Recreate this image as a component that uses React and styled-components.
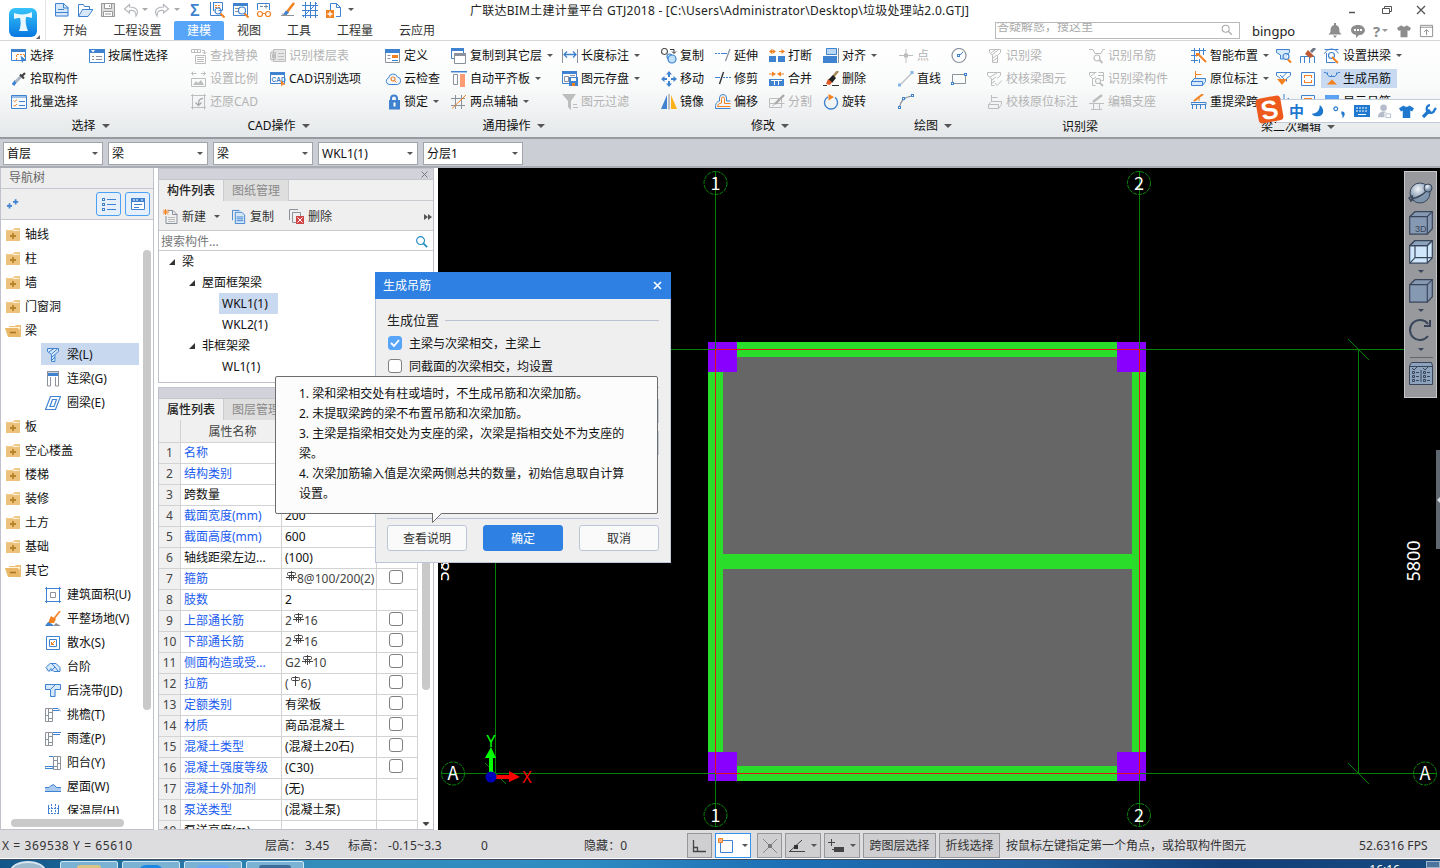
import React from 'react';
import styled, { createGlobalStyle, css } from 'styled-components';

const Global = createGlobalStyle`
  * { box-sizing: border-box; }
  html, body { margin: 0; padding: 0; overflow: hidden; }
  body { font: 12px/16px "Noto Sans", "Noto Sans CJK SC", sans-serif; color: #111; background: #fff; }
  svg { display: block; flex: none; }
`;

/* ---------- icon drawings: [kind, colour, path, width] ---------- */
const B = '#3f83d0';
const L = '#d7e8fb';
const G = '#8b929b';
const D = '#bdbdbd';
const O = '#f28122';
const N = '#39465a';

const icons = {
  file: [['f', L, 'M1.5 1.5h8l5 4v9h-13z'], ['s', B, 'M1.5 1.5h8l4.500 4v8.500h-12.500z M9.500 1.500v4.500h5 M1.500 10.500h12.500 M4 7.500h6']],
  folder: [['s', B, 'M1.500 14V2.500h5l1 2h5v2.500'], ['f', L, 'M1.500 14.500l4-7h10.500l-5 7z'], ['s', B, 'M1.500 14.500l4-7h10.500l-5 7z']],
  save: [['f', '#ddd', 'M1 1h14v14H1z'], ['s', '#999', 'M1.500 1.500h13v13h-13z M4.500 1.500v5h7v-5 M3.500 14.500v-5h9v5'], ['f', '#fff', 'M5 2h6v4H5z M4 10h8v4H4z'], ['s', '#999', 'M5 12h6 M9.500 3v2']],
  undo: [['s', '#b5b8bc', 'M6.500 2.500L1.500 7l5 4V8.500c5-.5 6.500 1 6.500 5.500 3-4 1.500-9-6.500-9z', 1.2]],
  redo: [['s', '#b5b8bc', 'M9.500 2.500L14.500 7l-5 4V8.500C4.500 8 3 9.500 3 14 0 10 1.500 5 9.500 5z', 1.2]],
  sigma: [['t', B, 3, 14, 16, 'Σ']],
  qFind: [['s', B, 'M1.500 0v13.500h13 M4.500 0v9 M4.500.5h9v8h-4'], ['d', O, 'M6 3.500h6 M6 5.500h6'], ['c', B, 9, 9, 3], ['s', O, 'M11.500 11.500l4 4', 2]],
  qView: [['s', B, 'M.5 1.500h14v12h-14z'], ['f', B, 'M0 1h15v3H0z'], ['s', G, 'M2 6.500h4 M2 9.500h3'], ['c', B, 9, 8.500, 3.500], ['s', O, 'M11.500 11.500l4 4', 2]],
  qGlass: [['s', B, 'M1.500 8V1.500h12V8'], ['s', '#789', 'M4 4.500h3 M8 4.500h4 M10 2.500v4'], ['c', O, 4, 12, 2.500], ['c', O, 12, 12, 2.500], ['s', O, 'M6.500 11.500h3']],
  qBrush: [['s', O, 'M14 1L7 10', 2.6], ['f', B, 'M6 8.500l3 2-3 3-3-1z'], ['s', G, 'M1 13.500h13 M2 12l4 1']],
  qGrid: [['s', B, 'M3.500 0v16 M8.500 0v16 M13.500 0v16 M0 3.500h16 M0 8.500h16 M0 13.500h16 M1 15L15 1']],
  qAdd: [['s', B, 'M4.500 8V1.500h6l4 4v9H10'], ['s', B, 'M10.500 1.500v4h4'], ['f', O, 'M0 8h8v8H0z'], ['s', '#fff', 'M4 9.500v5 M1.500 12h5', 1.4]],
  select: [['f', '#fff', 'M0 1h14v11H0z'], ['s', B, 'M.5 1.500h14v11H.5z'], ['f', B, 'M0 1h15v3H0z'], ['d', O, 'M5.500 12V6.500h8 M13.500 7v2'], ['f', B, 'M9.500 7.500l6 5-3 .2-1.500 2.300z']],
  byprop: [['f', '#fff', 'M0 2h16v12H0z'], ['s', B, 'M.5 1.500h15v13H.5z'], ['f', B, 'M0 1h16v4H0z'], ['s', G, 'M3 8.500h2 M7 8.500h6 M3 11.500h2 M7 11.500h6'], ['f', '#fff', 'M2 2h4L4 4.500z']],
  pick: [['s', B, 'M2 14l3-4', 3], ['s', '#aab4c4', 'M4.500 11L11 4.500', 3], ['s', '#444', 'M9 3.500l4 4 M11.500 4.500L14 2', 2.200]],
  batch: [['f', '#f6faff', 'M0 2h16v12H0z'], ['s', B, 'M.5 1.500h15v13H.5z M0 3h16'], ['s', O, 'M2.500 6.500l1.200 1.200L6 5.500 M2.500 11l1.200 1.200L6 10'], ['s', B, 'M8 7.500h6 M8 11.500h6']],
  replace: [['s', D, 'M.5 1.500h9v3h-9z M3.500 1.500v3 M6.500 1.500v3 M11 2.500h2.500V6 M11.500 4l2 2 2-2 M4.500 7.500h10v8h-10z M6 9.500h7 M6 11.500h7 M6 13.500h7']],
  scale: [['s', D, 'M.5 7.500h14v8H.5z M.5 2.500h5 M2.500.5l-2 2 2 2 M10 2.500h5 M12.500.5l2 2-2 2'], ['f', D, 'M2 14l3-4 2 2 3-3 3 5z']],
  restore: [['s', D, 'M1.500 0v15.500 M0 1.500h15 M13.500 0v15.500 M0 13.500h15'], ['s', '#aaa', 'M12 4.500c-4 0-4.500 2-4.500 7 M4.500 8.500l3 3 3-3', 1.300]],
  layer: [['f', '#e7e7e7', 'M1 2h15v12H1z'], ['s', D, 'M3.500 1.500h12v12h-12z M.5 4.500h5v7h-5z M8 5.500h6 M8 8.500h6 M8 11.500h6'], ['f', D, 'M2 6h3v4H2z']],
  cad: [['f', '#fff', 'M0 1h15v11H0z'], ['s', B, 'M.5 1.500h14v11H.5z'], ['f', B, 'M0 1h15v3H0z'], ['t', B, 1.500, 11, 6.500, 'CAD'], ['f', O, 'M10.500 9l5 4.500-2.700.2-1.300 2z']],
  define: [['f', '#fff', 'M1 2h14v12H1z'], ['s', G, 'M.5 4v10.500h14V4'], ['f', B, 'M0 1h15v4H0z'], ['s', G, 'M2.500 7.500h3 M2.500 10.500h3'], ['f', O, 'M7 7h6v3H7z'], ['s', B, 'M7 12.500h6']],
  cloud: [['f', '#eef6ff', 'M4 13a3.500 3.500 0 0 1 0-6 4.500 4.500 0 0 1 8.500 0 3 3 0 0 1 0 6z'], ['s', B, 'M4 13.500a3.400 3.400 0 0 1-.5-6.500A4.700 4.700 0 0 1 12.500 6a3.800 3.800 0 0 1 0 7.500z'], ['c', O, 8, 8, 2], ['s', O, 'M9.500 9.500l2 2']],
  lock: [['s', B, 'M6 7V4.500a3 3 0 0 1 6 0V7', 2], ['f', B, 'M4 6h11v9.500H4z'], ['f', '#fff', 'M8.500 8.500h2v4h-2z']],
  copylayer: [['f', '#fff', 'M0 1h12v10H0z'], ['s', B, 'M.5.5h12v10H.5z'], ['f', B, 'M0 0h13v3H0z'], ['f', '#fff', 'M3 6h12v9H3z'], ['s', G, 'M3.500 5.500h11v10h-11z'], ['f', G, 'M3 5h12v3H3z']],
  align2: [['s', B, 'M0 .7h16', 1.500], ['s', G, 'M2.500 3.500h4v10h-4z'], ['f', '#fb9c74', 'M9 3h5v13H9z']],
  axis: [['s', G, 'M0 4.500h14 M0 11.500h14 M4.500 1v14 M10.500 1v14'], ['s', O, 'M1 14.500L15 1']],
  length: [['s', G, 'M.5 1v14 M15.500 1v14'], ['s', B, 'M2 6.500h12 M5 3.500l-3 3 3 3 M11 3.500l3 3-3 3', 1.300]],
  store: [['s', B, 'M.5.5h14v12H.5z'], ['f', B, 'M0 0h15v3H0z'], ['s', G, 'M2.500 5.500h4v5h-4z M8 4.500h5'], ['f', B, 'M7 6h9v9H7z'], ['f', '#fff', 'M9 7h5v3H9z'], ['f', O, 'M10 12h3v3h-3z']],
  filter: [['f', D, 'M0 0h14L9 7v9L6 13V7z'], ['s', D, 'M11 10.500h4 M11 13.500h5']],
  copy: [['c', '#555', 3.500, 3.500, 3], ['s', '#333', 'M9 1.500h4V5 M11 3.500l2 2 2-2'], ['c', B, 8.500, 8.500, 2.500], ['cf', '#bfe0f6', 11, 11, 4], ['c', B, 11, 11, 4]],
  move: [['f', B, 'M8 0l3 3.500H9V6H7V3.500H5z M8 16l3-3.500H9V10H7v2.500H5z M0 8l3.500-3v2H6v2H3.500v2z M16 8l-3.500-3v2H10v2h2.500v2z']],
  mirror: [['f', B, 'M6 1v14H0z'], ['s', '#888', 'M8 0v15.500'], ['f', '#fbb117', 'M10 1v14h6z']],
  extend: [['d', B, 'M0 5.500h8'], ['s', B, 'M8 5.500h4'], ['s', G, 'M15 1l-4.500 12', 1.300]],
  trim: [['s', B, 'M0 6.500h5'], ['d', B, 'M8 6.500h8'], ['s', '#333', 'M8.500 1L4.500 13', 1.400]],
  offset: [['s', B, 'M4.500 7V4a3.500 3.500 0 0 1 7 0v3h4M4.500 7C1 8 .5 10 .5 14.500h15'], ['s', O, 'M6.500 9V4.500a1.500 1.500 0 0 1 3 0V9.500h6 M6.500 9C4 9.500 3 10 2.500 12.500h13']],
  brk: [['f', B, 'M0 8h7v6H0z M9 8h7v6H9z'], ['f', O, 'M1 3h2.500V1L7 3.500 3.500 6V4H1z M0 3.500L3 1v5z'], ['f', O, 'M10 3h2.500V1L16 3.500 12.500 6V4H10z']],
  merge: [['f', B, 'M0 8h15v7H0z'], ['s', '#fff', 'M5.500 10v4 M9.500 10v4 M2 9.500h11'], ['f', O, 'M0 2.500h3V.5l4 2.500-4 2.500v-2H0z M15 2.500h-3V.5L8 3l4 2.500v-2h3z']],
  split: [['s', D, 'M.5 4.500h12v9H.5z M.5 9.500h15'], ['s', '#aaa', 'M15 1L6 10', 2.400], ['s', D, 'M3 12l3-2']],
  align: [['s', G, 'M15.500 0v15'], ['f', '#b9d6f5', 'M3 0h11v7H3z'], ['s', B, 'M3.500.5h10v6h-10z'], ['f', B, 'M0 8h14v7H0z']],
  erase: [['s', '#a88a58', 'M15 0L9 7', 2.600], ['f', '#222', 'M10 4l3 3-4 5-4-3z'], ['f', '#e05a2a', 'M5 8l4 3-2 3-4-1z'], ['s', '#333', 'M0 14.500h4 M9 14.500h7']],
  rotate: [['s', B, 'M5 2.800a6.500 6.500 0 1 0 7 .6', 1.400], ['f', O, 'M5.500 0l5.500 3-5.500 3.500z']],
  point: [['s', D, 'M8 1v14 M1 7.500h14'], ['f', D, 'M6 5.500h4v4H6z']],
  line: [['s', '#b9bcc1', 'M2 14L14 2', 1.200], ['f', '#86b5ea', 'M0 12.500h3v3H0z M12.500 0h3v3h-3z']],
  arc: [['s', G, 'M1.500 14.500C2 7 6 3 14 2', 1.200], ['sq', B, 0, 12], ['sq', B, 4, 3], ['sq', B, 13, 0]],
  circle: [['c', G, 8, 7.500, 7], ['s', B, 'M8 8l4-4'], ['sq', B, 6, 6]],
  rect: [['s', G, 'M1.500 3.500h13v9h-13z'], ['sq', B, 0, 11], ['sq', B, 13, 2]],
  beamD: [['s', D, 'M2.500 1.500h11v3l-3 3v7h-5v-7l-3-3z M4 5l4-3 M5 7l6-5 M6 10l4-3 M6 13l4-3']],
  hookD: [['s', D, 'M0 1.500h4l2 4h6l2-4h2'], ['c', D, 8, 10, 3], ['s', D, 'M10.500 12l3 3', 1.800]],
  checkD: [['s', D, 'M.5 1.500h13v3l-3.500 3 M.5 1.500v3l4 3v7l3 0 M3 6l7-4 M5 9l4-3 M5 12l3-2 M8 12l2 2.500 5-5']],
  compD: [['s', D, 'M.5 1.500h7 M.5 1.500v3l3 3v7h3 M9.500 1.500h5v8h-2 M9 4.500h5 M2 5l4-3 M4 8l3-2'], ['c', D, 9, 10, 2.500], ['s', D, 'M11 12l3 3', 1.800]],
  noteD: [['s', D, 'M4.500 8V1 M4.500 3.500h6 M4.500 7.500h9 M1.500 10.500l3-3h10v3l-3 4h-10z M1.500 10.500h10v4']],
  seatD: [['s', D, 'M4 8l9-7', 2.400], ['s', D, 'M0 9.500h15 M4.500 10v5 M10.500 10v5 M2 15.500h11']],
  smart: [['s', B, 'M0 2.500h15 M0 7.500h7 M0 12.500h7 M3.500 0v15 M8.500 0v6 M12.500 0v7 M8.500 11v4'], ['s', O, 'M7 6l8 8', 2], ['f', O, 'M5 5h4l-4 4z']],
  note: [['s', O, 'M4.500 8V0 M4.500 3.500h6'], ['f', L, 'M1 10l3-3h11l-3 7H1z'], ['s', B, 'M.5 10.500l3-3h11v3l-3 4H.5z M.5 10.500h11v4']],
  span: [['s', B, 'M0 8.500h15v2H0z M1.500 10v5 M5.500 10v5 M9.500 10v5 M14.500 10v5'], ['s', O, 'M3 7L12 0', 2], ['s', O, 'M8 2v5']],
  beamFind: [['f', L, 'M1 1h13v4l-3 2v4H5V7L1 5z'], ['s', B, 'M.5 1.500h13v3l-3 2.500 M.5 1.500v3l4 2.500v4h3'], ['c', B, 10, 8.500, 3], ['s', O, 'M12 11.500l3 3', 2.200]],
  spanBrush: [['s', B, 'M.5 15V8.500h14V15 M4.500 9v6 M9.500 9v6'], ['s', '#6f7685', 'M15 0l-4 4', 3], ['f', '#c05a34', 'M8 2l6 6-4 2-5-4z']],
  arch: [['s', B, 'M.5 5.500c3-6 11-6 14 0 M.5 1.500h14 M2.500 5v9.500h9'], ['c', B, 7.500, 7.500, 3], ['s', O, 'M8 9l6 6', 2]],
  beamTri: [['s', B, 'M.5 1.500h14v3l-4 3v3 M.5 1.500v3l4 3 M4 4l4 4 M11 1.500l-5 5'], ['f', O, 'M1 8h10l-5 6z']],
  sheet: [['s', B, 'M1.500 1.500h13v13h-13z'], ['s', O, 'M4 4.500h8 M4 11.500h8 M4.500 5v2 M11.500 9v2 M4.500 9v2 M11.500 5v2']],
  hook: [['s', B, 'M0 1.500h2l3 4h6l3-4h2 M3.500 3.500v-2 M12.500 3.500v-2 M7.500 4v2'], ['f', O, 'M8 8.500l5 5H3z']],
  starB: [['s', B, 'M8 0v7 M3 4l4 3 M13 4l-4 3 M2 9h12']],
  flagB: [['f', '#5aa2f3', 'M1 1h14v8H1z']],
  bell: [['f', '#8d8d8d', 'M7 0h2v2c3 1 3.500 3 3.500 7l2 2.500h-13l2-2.500C3.500 5 4 3 7 2z M6 12.500h4L8 15z']],
  chat: [['f', '#8d8d8d', 'M8 2c9 0 9 10 1 10l-3 3v-3C-1 11-1 2 8 2z'], ['d', '#fff', 'M4 7h8', 1.800]],
  shirt: [['f', '#8d8d8d', 'M5 1.500c1 2 5 2 6 0l5 3-2 3.500-2-1v8H4V7L2 8 0 4.500z']],
  winup: [['s', '#8d8d8d', 'M1.500 2.500h13v12h-13z M1 4.500h14 M8 13V7.500 M5.500 9.500L8 7l2.500 2.500']],
  search: [['c', '#aaa', 6.500, 6.500, 4], ['s', '#aaa', 'M9.500 9.500l4 4', 1.500]],
  searchB: [['c', '#1d8bc4', 7, 7, 4.200], ['s', '#1d8bc4', 'M10 10l4 4', 1.800]],
  plus2: [['s', B, 'M1 10h6 M4 7v6 M8 5.500h6 M11 2.500v6', 2]],
  listv: [['s', B, 'M6 3.500h9 M6 8.500h9 M6 13.500h9'], ['sq', B, 1, 2], ['sq', B, 1, 7], ['sq', B, 1, 12]],
  cardv: [['f', '#fff', 'M1 2h14v12H1z'], ['s', B, 'M1.500 2.500h13v11h-13z'], ['f', B, 'M1 2h14v4H1z'], ['d', '#fff', 'M3 4h6 M11 4h2'], ['s', B, 'M4 8.500h8 M4 11.500h5']],
  dirC: [['f', '#eec98a', 'M1 3h7l1-2h6v13H1z'], ['f', '#fdf3dd', 'M8 3h6v1H8z'], ['f', '#ecc27c', 'M1 4h14v10H1z'], ['s', '#b8842a', 'M8 6v6 M5 9h6', 1.800]],
  dirO: [['f', '#eec27a', 'M4 3h6l1-1h5v12H4z'], ['f', '#fff4dc', 'M4 4h11v2H4z'], ['f', '#e8b866', 'M0 5h13l2 9H3z'], ['s', '#a87422', 'M5 9.500h6', 1.500]],
  nBeam: [['f', L, 'M2 1h12v3l-3 3v8H6V7L2 4z'], ['s', B, 'M2.500 1.500h11v3l-3.500 3v7H6.500v-7l-4-3z M4 5l5-3.500 M6.500 7l6-5 M7 10l3-2.500 M7 13l3-3']],
  nLian: [['f', '#ccd2d8', 'M2 1h12v4H2z'], ['s', G, 'M2.500 4v11h3V6 M10.500 6v9h3V4 M2 .5h12 M2.500 0v5 M13.500 0v5'], ['f', B, 'M3 2h10v3H3z']],
  nRing: [['s', B, 'M5.500 1.500h10l-5 13H.5z M7.500 4.500h4L9 11.500H5z', 1.200]],
  nArea: [['s', B, 'M1.500 0v16 M14.500 0v16 M0 1.500h16 M0 14.500h16'], ['s', G, 'M5.500 5.500h5v5h-5z']],
  nFlat: [['s', O, 'M15 0L8 9', 1.600], ['f', O, 'M6 5l5 3-2 4-6 0z'], ['f', B, 'M0 15l3-4 4 2 2 2z'], ['f', G, 'M8 15l3-3 5 3z']],
  nWater: [['s', B, 'M1.500 1.500h13v13h-13z M4.500 4.500h7v7h-7z'], ['s', O, 'M10 6l-4 4 M6.500 7v2.500H9']],
  nStep: [['f', L, 'M1 9l4-5h6l4 4v4l-6 1-8-1z'], ['s', B, 'M1 8.500l4-4h6l4 4v4H9l-3-3-2 3-3-4z M6 4l4 4-4 4 M10 8l3 4']],
  nPost: [['f', L, 'M0 2h16v5h-5v7H5V7H0z'], ['s', B, 'M.5 1.500h15v5H10v7H5.500v-7h-5z M5.500 6.500l5-5']],
  nEave: [['s', G, 'M.5 1.500h7v13h-7z M3.500 1.500v13 M3.500 5.500h4 M.5 8.500h3 M3.500 11.500h4'], ['s', B, 'M8 1.500h5l3 3 M8 3.500h6']],
  nRain: [['s', G, 'M.5 1.500h7v13h-7z M3.500 1.500v13 M3.500 5.500h4 M.5 8.500h3 M3.500 11.500h4'], ['s', B, 'M8 1.500h8 M8 3.500h7']],
  nBalc: [['s', G, 'M8.500 1.500h7v13h-7z M12.500 1.500v13 M8.500 5.500h4 M12.500 8.500h3 M8.500 11.500h4'], ['s', B, 'M4 1.500h4 M0 11.500h8v2H0z']],
  nRoof: [['f', '#a9c9ee', 'M0 8h4l4-3 4 3h4v4H0z'], ['s', B, 'M0 8.500h4l2-2h1l1.500-1 3 3H16 M0 12.500h16']],
  nWarm: [['s', B, 'M3.500 2v13 M13.500 2v13'], ['d', B, 'M6.500 1v14 M10.500 1v14 M3 5.500h11 M3 10.500h11']],
  newdoc: [['s', G, 'M5 1.500h5l4 4v9h-11V7 M9.500 1.500v4h5'], ['s', '#bbb', 'M5 8.500h7 M5 10.500h7 M5 12.500h7'], ['s', O, 'M0 .5l5 5 M5 .5l-5 5 M2.500 0v6 M0 3h6']],
  copydoc: [['s', B, 'M.5 12V1.500H8'], ['f', L, 'M3 3h8l2 2v10H3z'], ['s', B, 'M3.500 3.500h7l3 3v9h-10z M5 8.500h7 M5 10.500h7 M5 12.500h7']],
  deldoc: [['s', G, 'M.5 11V.5H9 M3.500 13V3.500h8V7 M3.500 13.500H7'], ['f', '#cf4545', 'M7 7h8v8H7z'], ['s', '#fff', 'M8.500 8.500l5 5 M13.500 8.500l-5 5']],
  angle: [['s', '#444', 'M1.500 2v11.500H14 M1.500 9.500h4v4', 1.300]],
  box: [['s', B, 'M2.500 2.500h12v12h-12z'], ['f', '#f8b68a', 'M1 0h4v5H1z'], ['s', O, 'M.5.5h4v4h-4z']],
  cross: [['s', '#888', 'M1 1l14 14 M15 1L1 15'], ['f', '#777', 'M6 6h4v4H6z']],
  ang2: [['s', '#444', 'M0 13.500h16 M1 13L13 2'], ['f', '#333', 'M5 7h4v4H5z']],
  plusbox: [['s', '#444', 'M0 4.500h7 M3.500 1v7 M4 11.500h2'], ['f', '#444', 'M6 9h10v5H6z']],
  moon: [['f', '#1f78cf', 'M10 1c6 4 5 13-2 13-4 0-6-1-7-3 6 0 9-4 9-10z']],
  dots: [['c', '#1f78cf', 4, 5, 2], ['f', '#1f78cf', 'M10 8c4-1 5 4 1 7 0-2 1-3-1-4z']],
  keys: [['f', '#1f78cf', 'M0 2h16v12H0z'], ['d', '#fff', 'M2 5h12 M2 8h12'], ['s', '#fff', 'M4 11.500h8']],
  user: [['cf', '#b5bccb', 7, 4, 3.500], ['f', '#b5bccb', 'M1 14c0-8 12-8 12 0z'], ['f', '#fff', 'M8 9h7v6H8z'], ['s', '#b5bccb', 'M9.500 10.500h5v4h-5z']],
  shirtB: [['f', '#1f78cf', 'M5 1.500c1 2 5 2 6 0l5 3-2 3.500-2-1v8H4V7L2 8 0 4.500z']],
  wrench: [['s', '#1f78cf', 'M2 14l7-7', 3.200], ['s', '#1f78cf', 'M13.500 7a4 4 0 1 1-4.500-5 M13 7.500L15 5', 2.200]],
};

const draw = ([k, c, a, b, e, s], i) => {
  if (k === 'f') return <path key={i} d={a} fill={c} />;
  if (k === 's') return <path key={i} d={a} fill="none" stroke={c} strokeWidth={b || 1} />;
  if (k === 'd') return <path key={i} d={a} fill="none" stroke={c} strokeWidth={b || 1} strokeDasharray="2 1" />;
  if (k === 'c') return <circle key={i} cx={a} cy={b} r={e} fill="none" stroke={c} strokeWidth="1.2" />;
  if (k === 'cf') return <circle key={i} cx={a} cy={b} r={e} fill={c} />;
  if (k === 'sq') return <rect key={i} x={a + 0.5} y={b + 0.5} width="2" height="2" fill="#fff" stroke={c} />;
  return <text key={i} x={a} y={b} fontSize={e} fontWeight="bold" fontFamily="Liberation Sans, sans-serif" fill={c}>{s}</text>;
};
const Icon = ({ n, size = 16 }) => (
  <svg width={size} height={size} viewBox="0 0 16 16">{icons[n].map(draw)}</svg>
);

const Caret = styled.i`
  flex: none;
  border: solid transparent;
  border-width: ${p => (p.$big ? '4px 4px 0' : '3px 3px 0')};
  border-top-color: ${p => p.$c || '#555'};
  margin-left: ${p => p.$ml ?? 5}px;
`;

/* ---------- layout shell ---------- */
const Screen = styled.div`
  position: relative; width: 1440px; height: 868px; overflow: hidden;
  display: flex; flex-direction: column; white-space: nowrap;
`;
const Header = styled.header`
  height: 41px; flex: none; display: flex; background: #fff; border-bottom: 1px solid #d5d7da;
`;
const AppButton = styled.div`
  width: 46px; height: 40px; padding: 8px 0 0 9px; border-right: 1px solid #e2e4e6; position: relative;
  &::after { content: ''; position: absolute; right: 5px; bottom: 1px; border: 2px solid; border-color: transparent #666 #666 transparent; }
`;
const HeadLeft = styled.div`width: 424px; display: flex; flex-direction: column;`;
const QuickBar = styled.div`height: 22px; display: flex; align-items: center; padding: 0 0 2px 8px;`;
const QItem = styled.div`margin-left: ${p => p.$ml}px; display: flex;`;
const Tabs = styled.nav`display: flex; height: 19px; padding-left: 3px;`;
const Tab = styled.span`
  width: ${p => p.$w}px; text-align: center; line-height: 20px; color: #333; height: 19px;
  ${p => p.$on && css`background: #57a5f9; color: #fff; border-radius: 2px 2px 0 0;`}
`;
const Title = styled.h1`
  margin: 3px 0 0; width: 525px; font-size: 12px; font-weight: 400; color: #222; letter-spacing: ${p => p.$ls}px;
`;
const HeadRight = styled.div`width: 445px; display: flex; flex-direction: column;`;
const WinRow = styled.div`height: 22px; display: flex; justify-content: flex-end; align-items: center; gap: 24px; padding: 0 14px 2px 0;`;
const UserRow = styled.div`display: flex; align-items: center; height: 17px;`;
const AskBox = styled.div`
  width: 245px; height: 17px; border: 1px solid #b9b9b9; overflow: hidden; display: flex; justify-content: space-between;
  color: #aaa; padding: 0 5px 0 1px;
  span { line-height: 8px; height: 17px; }
`;
const User = styled.span`font: 13px/16px "Noto Sans", sans-serif; color: #222; width: 75px; padding-left: 12px;`;
const Help = styled.span`font: bold 15px/16px "Noto Sans", sans-serif; color: #8d8d8d; margin-left: 7px;`;

/* ---------- ribbon ---------- */
const Ribbon = styled.div`
  height: 98px; flex: none; display: flex; border-bottom: 2px solid #979a9f;
  background: linear-gradient(#fff 0%, #fafbfb 45%, #e5e8ea 100%);
`;
const Group = styled.section`
  width: ${p => p.$w}px; display: flex; flex-direction: column; position: relative;
  &::after { content: ''; align-self: flex-end; width: 1px; position: absolute; right: 0; top: 3px; bottom: 3px; background: #cdd0d3; }
`;
const GroupBody = styled.div`display: flex; height: 72px; padding: 3px 0 0 ${p => p.$pl || 9}px;`;
const GroupName = styled.div`display: flex; align-items: center; justify-content: center; height: 24px; padding: ${p => (p.$low ? 4 : 2)}px ${p => (p.$low ? 0 : 1)}px 0 0;`;
const Col = styled.div`width: ${p => p.$w}px; flex: none;`;
const Tool = styled.div`
  height: 23px; display: flex; align-items: center; gap: 3px; color: ${p => (p.$off ? '#b3b3b3' : '#111')};
  ${p => p.$hot && css`background: #c8daf2; height: 19px; margin: 2px 0 2px -3px; padding-left: 3px; width: 76px;`}
`;
const ribbon = [
  { w: 182, pl: 11, name: '选择', arrow: 1, cols: [[78, ['select', '选择'], ['pick', '拾取构件'], ['batch', '批量选择']], [90, ['byprop', '按属性选择']]] },
  { w: 194, name: 'CAD操作', arrow: 1, cols: [[79, ['replace', '查找替换', 'o'], ['scale', '设置比例', 'o'], ['restore', '还原CAD', 'o']], [100, ['layer', '识别楼层表', 'o'], ['cad', 'CAD识别选项']]] },
  { w: 276, name: '通用操作', arrow: 1, cols: [[66, ['define', '定义'], ['cloud', '云检查'], ['lock', '锁定', 'a']], [111, ['copylayer', '复制到其它层', 'a'], ['align2', '自动平齐板', 'a'], ['axis', '两点辅轴', 'a']], [90, ['length', '长度标注', 'a'], ['store', '图元存盘', 'a'], ['filter', '图元过滤', 'o']]] },
  { w: 237, name: '修改', arrow: 1, cols: [[54, ['copy', '复制'], ['move', '移动'], ['mirror', '镜像']], [54, ['extend', '延伸'], ['trim', '修剪'], ['offset', '偏移']], [54, ['brk', '打断'], ['merge', '合并'], ['split', '分割', 'o']], [60, ['align', '对齐', 'a'], ['erase', '删除'], ['rotate', '旋转']]] },
  { w: 89, name: '绘图', arrow: 1, cols: [[53, ['point', '点', 'o'], ['line', '直线'], ['arc', '']], [20, ['circle', ''], ['rect', '']]] },
  { w: 204, name: '识别梁', low: 1, cols: [[102, ['beamD', '识别梁', 'o'], ['checkD', '校核梁图元', 'o'], ['noteD', '校核原位标注', 'o']], [90, ['hookD', '识别吊筋', 'o'], ['compD', '识别梁构件', 'o'], ['seatD', '编辑支座', 'o']]] },
  { w: 232, name: '梁二次编辑', arrow: 1, low: 1, cols: [[85, ['smart', '智能布置', 'a'], ['note', '原位标注', 'a'], ['span', '重提梁跨']], [24, ['beamFind', ''], ['beamTri', ''], ['starB', '']], [24, ['spanBrush', ''], ['sheet', ''], ['sheet', '']], [90, ['arch', '设置拱梁', 'a'], ['hook', '生成吊筋', 'h'], ['flagB', '显示吊筋']]] },
];

/* ---------- filter bar ---------- */
const FilterBar = styled.div`
  height: 29px; flex: none; display: flex; gap: 5px; padding: 3px 0 0 3px; background: #cbced4; border-bottom: 2px solid #a9acb3;
`;
const Combo = styled.div`
  width: 100px; height: 23px; background: #fff; border: 1px solid #a2a4a9; padding: 0 4px 0 3px;
  display: flex; justify-content: space-between; align-items: center;
`;

/* ---------- main ---------- */
const Main = styled.main`height: 662px; flex: none; display: flex; background: #fff;`;
const Nav = styled.aside`width: 154px; border: 1px solid #bfc2ca; border-top: 0; display: flex; flex-direction: column; position: relative;`;
const NavTitle = styled.div`height: 21px; background: #eee; color: #666; padding: 2px 0 0 8px; border-bottom: 1px solid #c5c8cf;`;
const NavTools = styled.div`height: 31px; background: #eee; border-bottom: 1px solid #c5c8cf; display: flex; align-items: center; padding: 0 3px 0 5px; gap: 4px;`;
const ViewButton = styled.div`width: 25px; height: 24px; border: 1px solid #4aa0f5; border-radius: 3px; background: #e5f0fc; display: flex; align-items: center; justify-content: center; &:nth-child(2) { margin-left: auto; }`;
const NavList = styled.div`height: 594px; padding-top: 2px; overflow: hidden; display: flex; flex-direction: column;`;
const NavRow = styled.div`height: 24px; flex: none; display: flex; align-items: center; gap: 4px; padding: 1px 0 0 4px;`;
const NavLeaf = styled.div`
  height: 22px; flex: none; margin: 1px 14px 1px 40px; padding: 1px 0 0 4px; display: flex; align-items: center; gap: 6px;
  background: ${p => (p.$on ? '#c8d9ef' : 'transparent')};
`;
const Thumb = styled.div`position: absolute; border-radius: 5px; background: #c9c9c9; width: ${p => p.$w}px; height: ${p => p.$h}px; left: ${p => p.$x}px; top: ${p => p.$y}px;`;

const Side = styled.div`width: 276px; margin-left: 4px; display: flex; flex-direction: column;`;
const Panel = styled.section`border: 1px solid #bfc2ca; border-top: 0; height: ${p => p.$h}px; margin-bottom: ${p => p.$mb || 0}px; position: relative; overflow: hidden; background: #fff;`;
const PanelBar = styled.div`height: 12px; background: #d2d3da; border-top: 1px solid #c3c5cc; border-bottom: 1px solid #c3c5cc; display: flex; justify-content: flex-end; padding: 2px 5px; `;
const PTabs = styled.div`height: 21px; display: flex; background: #f0f0f0; border-bottom: 1px solid #c9cbd0;`;
const PTab = styled.div`width: 65px; line-height: 21px; text-align: center; height: 21px; border-right: 1px solid #c9cbd0; color: ${p => (p.$on ? '#222' : '#8a8a8a')}; background: ${p => (p.$on ? '#f0f0f0' : '#dedede')}; ${p => p.$on && 'font-weight: 500;'} overflow: hidden;`;
const PTools = styled.div`height: 30px; background: #efefef; display: flex; align-items: center; padding: 2px 0 0 4px; color: #333; border-bottom: 1px solid #c9cbd0;`;
const PTool = styled.div`display: flex; align-items: center; gap: 3px; width: ${p => p.$w}px;`;
const PSearch = styled.div`height: 20px; display: flex; justify-content: space-between; align-items: center; padding: 2px 4px 0 2px; color: #777; border-bottom: 1px solid #c9cbd0;`;
const TreeRow = styled.div`
  height: 21px; padding-left: ${p => p.$l}px; display: flex; align-items: center; gap: 7px;
  span { padding: 3px 10px 2px 3px; margin-left: -3px; ${p => p.$on && 'background: #c8d9f0;'} }
`;
const Tri = styled.i`border: 3px solid; border-color: transparent #333 #333 transparent;`;
const Row = styled.div`display: grid; grid-template-columns: 22px 101px 95px 41px; color: #111;`;
const Cell = styled.div`
  border-right: 1px solid #d3d3d6; border-bottom: 1px solid #d3d3d6; height: 21px; line-height: 20px; overflow: hidden;
  padding-left: 3px; display: flex; align-items: center; white-space: pre;
  ${p => p.$num && css`background: #f0f0f1; color: #444; padding: 0; justify-content: center;`}
  ${p => p.$blue && 'color: #1b5cf0;'}
  ${p => p.$soft && 'color: #444; padding-bottom: 1px;'}
  ${p => p.$head && css`background: #f0f0f0; color: #444; justify-content: center; height: 23px; padding-top: 1px;`}
`;
const Check = styled.i`
  width: 14px; height: 14px; border: 1px solid #808080; border-radius: 3px; background: #fff; margin-left: ${p => p.$ml || 0}px; flex: none; margin-top: ${p => p.$mt ?? -2}px;
  ${p => p.$on && css`background: #57a5f9; border-color: #57a5f9; display: flex; align-items: center; justify-content: center;`}
`;
const BarWrap = styled.span`margin: -5px 0 0 1px; display: inline-block;`;
const Rebar = ({ one }) => (
  <BarWrap>
    <svg width="11" height="10" viewBox="0 0 11 10" fill="none" stroke="#444" strokeWidth="1">
      <path d="M2.500 1.500h6q1 0 1 1v1q0 1-1 1h-6q-1 0-1-1v-1q0-1 1-1zM5.500 0v10" />
      {!one && <path d="M0 6.500h11M3.500 4.500v4M7.500 4.500v4" />}
    </svg>
  </BarWrap>
);

const nav = [
  ['c', '轴线'], ['c', '柱'], ['c', '墙'], ['c', '门窗洞'], ['o', '梁'],
  ['nBeam', '梁(L)', 1], ['nLian', '连梁(G)'], ['nRing', '圈梁(E)'],
  ['c', '板'], ['c', '空心楼盖'], ['c', '楼梯'], ['c', '装修'], ['c', '土方'], ['c', '基础'], ['o', '其它'],
  ['nArea', '建筑面积(U)'], ['nFlat', '平整场地(V)'], ['nWater', '散水(S)'], ['nStep', '台阶'], ['nPost', '后浇带(JD)'],
  ['nEave', '挑檐(T)'], ['nRain', '雨蓬(P)'], ['nBalc', '阳台(Y)'], ['nRoof', '屋面(W)'], ['nWarm', '保温层(H)'],
];
const props = [
  ['名称', ''], ['结构类别', ''], ['跨数量', '', 0, 1], ['截面宽度(mm)', '200'], ['截面高度(mm)', '600'],
  ['轴线距梁左边...', '(100)', 0, 1], ['箍筋', <><Rebar />8@100/200(2)</>, 1], ['肢数', '2'],
  ['上部通长筋', <>2<Rebar />16</>, 1], ['下部通长筋', <>2<Rebar />16</>, 1], ['侧面构造或受...', <>G2<Rebar />10</>, 1],
  ['拉筋', <>(<Rebar one />6)</>, 1], ['定额类别', '有梁板', 1], ['材质', '商品混凝土', 1], ['混凝土类型', '(混凝土20石)', 1],
  ['混凝土强度等级', '(C30)', 1], ['混凝土外加剂', '(无)'], ['泵送类型', '(混凝土泵)'], ['泵送高度(m)', '', 0, 1],
];

/* ---------- model view ---------- */
const View = styled.div`margin-left: 4px; width: 1002px; position: relative; background: #000; overflow: hidden;`;
const ViewTools = styled.div`
  position: absolute; left: 966px; top: 3px; width: 33px; height: 227px; background: #97999d; border: 1px solid #c6c8cb;
  display: flex; flex-direction: column; align-items: center; padding-top: 9px;
`;
const ViewTool = styled.div`height: ${p => p.$h}px; display: flex; flex-direction: column; align-items: center; justify-content: space-between;`;
const Handle = styled.div`
  position: absolute; right: 0; top: 282px; width: 4px; height: 99px; background: #5f6771; display: flex; align-items: center;
  &::after { content: ''; border: solid transparent; border-width: 3px 3px 3px 0; border-right-color: #d7dade; margin-left: 1px; }
`;
const Bubble = ({ x, y, t }) => (
  <>
    <circle cx={x} cy={y} r="11.500" fill="none" stroke="#0a8a0a" strokeDasharray="4 1" />
    <text x={x} y={y + 6.500} textAnchor="middle" fontSize="18" fontFamily="Noto Sans CJK SC, sans-serif" fill="#fff">{t}</text>
  </>
);
const Model = () => (
  <svg width="1002" height="662" viewBox="438 168 1002 662" fontFamily="Noto Sans, sans-serif" shapeRendering="crispEdges">
    <rect x="708" y="342" width="438" height="439" fill="#2bdd2b" />
    <path d="M723 357h409v197h-409zM723 569h409v197h-409z" fill="#666" />
    <path d="M708 342h29v30h-29zM1117 342h29v30h-29zM708 752h29v29h-29zM1117 752h29v29h-29z" fill="#8a00ff" />
    <g stroke="#058005" fill="none">
      <path d="M715.500 171v656M1139.500 171v656M441 349.500h964M441 773.500h995M495.500 349v424M1358.500 349v424" />
      <path d="M1348 339l21 21M1348 763l21 21M485 763l21 21" />
    </g>
    <path d="M715.500 349.500h424v424h-424z" fill="none" stroke="#e01515" />
    <g shapeRendering="auto">
      <Bubble x={715.500} y={183} t="1" /><Bubble x={1139} y={183} t="2" />
      <Bubble x={715.500} y={815} t="1" /><Bubble x={1139} y={815} t="2" />
      <Bubble x={453} y={773.500} t="A" /><Bubble x={1425} y={773.500} t="A" />
      <text transform="translate(1420 561) rotate(-90)" textAnchor="middle" fontSize="18" fill="#fff">5800</text>
      <text transform="translate(449 561) rotate(-90)" textAnchor="middle" fontSize="18" fill="#fff">5800</text>
      <path d="M438 540h3v45h-3z" fill="#000" />
      <path d="M489 775v-17h-4l6-11 5 11h-3v17z" fill="#0f0" />
      <path d="M494 775h15v-4l11 6-11 5v-3h-15z" fill="#f00" />
      <circle cx="491" cy="777" r="5.500" fill="#0000b8" />
      <text x="491" y="747" textAnchor="middle" fontSize="16" fill="#0f0">Y</text>
      <text x="527" y="783" textAnchor="middle" fontSize="16" fill="#f00">X</text>
    </g>
  </svg>
);
const Cube = ({ kind }) => (
  <svg width="24" height="24" viewBox="0 0 24 24" stroke={N} strokeWidth="1.200">
    <path d="M.7 5.700L6 .7h17.300v17l-5 5.500H.7z" fill={kind === 'wire' ? '#cfe6fb' : '#8699b2'} />
    {kind === 'wire' && <path d="M.7 5.700L6 .7h17.300l-5 5z" fill="#8da3bd" />}
    <path d="M.7 5.700h17.600v17.500M18.300 5.700l5-5" fill="none" />
    {kind === 'wire' && <path d="M6 5.700v12h17M6 17.700l-5 5.500" fill="none" />}
    {kind === '3d' && <text x="6" y="21" fontSize="9" stroke="none" fill={N} fontFamily="Liberation Sans, sans-serif">3D</text>}
  </svg>
);

/* ---------- dialog ---------- */
const Dialog = styled.div`
  position: absolute; left: 375px; top: 272px; width: 296px; height: 291px; background: #efeff0; border: 1px solid #bcc6d6;
  display: flex; flex-direction: column;
`;
const DTitle = styled.div`
  height: 27px; margin: -1px -1px 0; background: #2e80e2; color: #fff; display: flex; align-items: center; justify-content: space-between; padding: 0 9px 0 8px;
`;
const DBody = styled.div`flex: 1; padding: 12px 11px 0; display: flex; flex-direction: column;`;
const Legend = styled.div`
  display: flex; align-items: center; gap: 6px; font-size: 13px; height: 18px; color: #222; margin-bottom: 3px;
  &::after { content: ''; flex: 1; height: 1px; background: #b9c3d1; }
`;
const DCheck = styled.div`height: 23px; display: flex; align-items: center; gap: 7px; padding: 1px 0 0 1px;`;
const DField = styled.div`height: 24px; border: 1px solid #c0c8d4; background: #fff; margin-bottom: 8px;`;
const DButtons = styled.div`border-top: 1px solid #b9c3d6; margin-top: auto; padding: 6px 0 11px; display: flex; justify-content: space-between;`;
const DButton = styled.div`
  width: 80px; height: 26px; border: 1px solid #bcc5d6; border-radius: 3px; background: #fafafb; line-height: 26px; text-align: center; color: #333;
  ${p => p.$main && 'background: #2e80e2; border-color: #2e80e2; color: #fff;'}
`;
const Tip = styled.div`
  position: absolute; left: 275px; top: 376px; width: 383px; height: 138px; background: #fcfcfc; border: 1px solid #6d6d6d; border-radius: 2px;
  padding: 7px 20px 0 23px; line-height: 20px; white-space: normal; color: #111;
  p { margin: 0; width: 335px; }
  svg { position: absolute; left: 156px; top: 135px; }
`;

/* ---------- input method bar ---------- */
const Ime = styled.div`
  position: absolute; left: 1276px; top: 99px; width: 166px; height: 24px; background: #fff; border: 1px solid #c0ccd9;
  display: flex; align-items: center; gap: 7px; padding-left: 12px;
  b { color: #1f78cf; font-size: 15px; }
`;
const ImeLogo = styled.div`
  position: absolute; left: 1257px; top: 97px; width: 25px; height: 25px; border-radius: 4px; background: #ee5a1c; transform: rotate(-10deg);
  color: #fff; font: bold 26px/26px "Liberation Sans", sans-serif; text-align: center;
`;

/* ---------- status and taskbar ---------- */
const Status = styled.footer`
  height: 28px; flex: none; background: #dddde0; display: flex; align-items: center; padding: 3px 12px 0 2px; color: #333;
`;
const SText = styled.span`width: ${p => p.$w}px; letter-spacing: ${p => p.$ls || 0}px; flex: none;`;
const SButton = styled.div`
  width: ${p => p.$w}px; height: 25px; margin-right: ${p => p.$mr ?? 3}px; border: 1px solid #97979b; background: #cfcfd2; flex: none;
  display: flex; align-items: center; justify-content: center;
  ${p => p.$on && 'background: #fff; border-color: #3392f0;'}
`;
const Taskbar = styled.div`
  height: 10px; flex: none; display: flex; gap: 4px; padding-left: 10px; border-top: 1px solid #fff; box-shadow: inset 0 1px #3b4b60;
  background: linear-gradient(90deg, #125688 0%, #338dbb 22%, #2f8cc2 40%, #1c6fb5 55%, #205f9e 72%, #123f78 85%, #174a80 100%);
`;
const Orb = styled.div`width: 36px; height: 20px; margin: 2px 10px 0 0; border-radius: 50%; background: #9db9cc; border: 2px solid #d8e6ef;`;
const TaskItem = styled.div`
  width: 58px; height: 12px; margin-top: 2px; border: 1px solid #cfe7f4; border-radius: 2px; background: #79b2d2; flex: none; display: flex; justify-content: center; padding-top: 3px;
  &::after { content: ''; width: ${p => p.$iw || 24}px; height: 14px; border-radius: ${p => p.$r || 3}px; background: ${p => p.$c}; }
`;
const Clock = styled.div`margin-left: auto; margin-right: 22px; color: #fff; line-height: 16px; padding-top: 3px;`;
const ShowDesk = styled.div`width: 14px; border: 1px solid #9fb6cc; background: #4c749c; margin-top: 2px;`;

export default function App() {
  return (
    <Screen>
      <Global />
      <Header>
        <AppButton>
          <svg width="28" height="29" viewBox="0 0 28 29">
            <defs><linearGradient id="lg" x2="0" y2="1"><stop stopColor="#36c3fa" /><stop offset="1" stopColor="#0878e0" /></linearGradient></defs>
            <rect width="28" height="29" rx="6" fill="url(#lg)" />
            <path d="M5 5c5 2 13 2 18-1v6c-2-1-4-1-6-1-1 5 0 9 2 14H10c2-5 2-9 1-13-2 0-4 0-6 1z" fill="#e9f8ff" />
          </svg>
        </AppButton>
        <HeadLeft>
          <QuickBar>
            <QItem $ml={0}><Icon n="file" /></QItem>
            <QItem $ml={7}><Icon n="folder" /></QItem>
            <QItem $ml={7}><Icon n="save" /></QItem>
            <QItem $ml={7}><Icon n="undo" /></QItem>
            <Caret $ml={3} $c="#aaa" />
            <QItem $ml={6}><Icon n="redo" /></QItem>
            <Caret $ml={4} $c="#aaa" />
            <QItem $ml={7}><Icon n="sigma" /></QItem>
            <QItem $ml={6}><Icon n="qFind" /></QItem>
            <QItem $ml={8}><Icon n="qView" /></QItem>
            <QItem $ml={7}><Icon n="qGlass" /></QItem>
            <QItem $ml={8}><Icon n="qBrush" /></QItem>
            <QItem $ml={6}><Icon n="qGrid" /></QItem>
            <QItem $ml={8}><Icon n="qAdd" /></QItem>
            <Caret $ml={6} />
          </QuickBar>
          <Tabs>
            <Tab $w={52}>开始</Tab><Tab $w={73}>工程设置</Tab><Tab $w={50} $on>建模</Tab><Tab $w={50}>视图</Tab>
            <Tab $w={50}>工具</Tab><Tab $w={62}>工程量</Tab><Tab $w={62}>云应用</Tab>
          </Tabs>
        </HeadLeft>
        <Title $ls={0.25}>广联达BIM土建计量平台 GTJ2018 - [C:\Users\Administrator\Desktop\垃圾处理站2.0.GTJ]</Title>
        <HeadRight>
          <WinRow>
            <svg width="12" height="12"><path d="M3 8.500h6" stroke="#555" strokeWidth="1.500" /></svg>
            <svg width="10" height="10" fill="none" stroke="#555"><path d="M2.500 3V1.500h7v5H8M.5 3.500h7v5h-7z" /></svg>
            <svg width="10" height="10"><path d="M1 1l8 8M9 1L1 9" stroke="#555" strokeWidth="1.300" /></svg>
          </WinRow>
          <UserRow>
            <AskBox><span>答疑解惑，搜这里</span><Icon n="search" size={14} /></AskBox>
            <User>bingpo</User>
            <QItem $ml={12}><Icon n="bell" /></QItem>
            <QItem $ml={7}><Icon n="chat" /></QItem>
            <Help>?</Help>
            <Caret $c="#999" $ml={2} />
            <QItem $ml={9}><Icon n="shirt" size={14} /></QItem>
            <QItem $ml={8}><Icon n="winup" size={15} /></QItem>
          </UserRow>
        </HeadRight>
      </Header>

      <Ribbon>
        {ribbon.map(g => (
          <Group key={g.name} $w={g.w}>
            <GroupBody $pl={g.pl}>
              {g.cols.map(([w, ...tools], i) => (
                <Col key={i} $w={w}>
                  {tools.map(([ic, label, f], j) => (
                    <Tool key={j} $off={f === 'o'} $hot={f === 'h'}>
                      <Icon n={ic} />{label}{f === 'a' && <Caret $ml={2} />}
                    </Tool>
                  ))}
                </Col>
              ))}
            </GroupBody>
            <GroupName $low={g.low}>{g.name}{g.arrow && <Caret $big $ml={6} />}</GroupName>
          </Group>
        ))}
      </Ribbon>

      <FilterBar>
        {['首层', '梁', '梁', 'WKL1(1)', '分层1'].map((t, i) => <Combo key={i}>{t}<Caret /></Combo>)}
      </FilterBar>

      <Main>
        <Nav>
          <NavTitle>导航树</NavTitle>
          <NavTools>
            <Icon n="plus2" size={14} />
            <ViewButton><Icon n="listv" /></ViewButton>
            <ViewButton><Icon n="cardv" /></ViewButton>
          </NavTools>
          <NavList>
            {nav.map(([k, t, on]) => (k === 'c' || k === 'o'
              ? <NavRow key={t}><Icon n={k === 'c' ? 'dirC' : 'dirO'} />{t}</NavRow>
              : <NavLeaf key={t} $on={on}><Icon n={k} />{t}</NavLeaf>))}
          </NavList>
          <Thumb $w={8} $h={460} $x={142} $y={82} />
          <Thumb $w={113} $h={8} $x={10} $y={651} />
        </Nav>

        <Side>
          <Panel $h={215} $mb={4}>
            <PanelBar><svg width="7" height="7"><path d="M.5.5l6 6M6.500.5l-6 6" stroke="#777" /></svg></PanelBar>
            <PTabs><PTab $on>构件列表</PTab><PTab>图纸管理</PTab></PTabs>
            <PTools>
              <PTool $w={69}><Icon n="newdoc" />新建<Caret /></PTool>
              <PTool $w={57}><Icon n="copydoc" size={15} />复制</PTool>
              <PTool $w={135}><Icon n="deldoc" />删除</PTool>
              <svg width="8" height="6"><path d="M0 0l4 3-4 3zM4 0l4 3-4 3z" fill="#555" /></svg>
            </PTools>
            <PSearch>搜索构件...<Icon n="searchB" size={15} /></PSearch>
            <TreeRow $l={10}><Tri />梁</TreeRow>
            <TreeRow $l={30}><Tri />屋面框架梁</TreeRow>
            <TreeRow $l={63} $on><span>WKL1(1)</span></TreeRow>
            <TreeRow $l={63}><span>WKL2(1)</span></TreeRow>
            <TreeRow $l={30}><Tri />非框架梁</TreeRow>
            <TreeRow $l={63}><span>WL1(1)</span></TreeRow>
          </Panel>
          <Panel $h={443}>
            <PanelBar />
            <PTabs><PTab $on>属性列表</PTab><PTab>图层管理</PTab></PTabs>
            <Row><Cell $head /><Cell $head>属性名称</Cell><Cell $head /><Cell $head /></Row>
            {props.map(([n, v, c, black], i) => (
              <Row key={i}>
                <Cell $num>{i + 1}</Cell><Cell $blue={!black}>{n}</Cell>
                <Cell $soft={typeof v !== 'string'}>{v}</Cell><Cell>{c ? <Check $ml={9} $mt={-4} /> : null}</Cell>
              </Row>
            ))}
            <Thumb $w={8} $h={250} $x={263} $y={53} />
            <Thumb as="svg" $w={8} $h={5} $x={263} $y={435} viewBox="0 0 8 5"><path fill="#fff" d="M0 0h8v5H0z" /><path d="M0 0h8L4 4z" fill="#444" /></Thumb>
          </Panel>
        </Side>

        <View>
          <Model />
          <ViewTools>
            <ViewTool $h={30}>
              <svg width="25" height="24" viewBox="0 0 25 24">
                <defs><radialGradient id="orb" cx=".4" cy=".3"><stop stopColor="#f2f6fa" /><stop offset="1" stopColor="#7e93ac" /></radialGradient></defs>
                <circle cx="12" cy="12" r="10" fill="url(#orb)" stroke={N} />
                <path d="M3 18C10 17 18 13 20 6M1 17l3-2 1 3-2 2z" fill="none" stroke={N} strokeWidth="1.500" />
                <circle cx="20" cy="7" r="4" fill="url(#orb)" stroke={N} />
              </svg>
            </ViewTool>
            <ViewTool $h={29}><Cube kind="3d" /></ViewTool>
            <ViewTool $h={33}><Cube kind="wire" /><Caret $ml={0} $c={N} /></ViewTool>
            <ViewTool $h={39}><i /><Cube /><Caret $ml={0} $c={N} /></ViewTool>
            <ViewTool $h={39}>
              <i />
              <svg width="24" height="24" viewBox="0 0 24 24" fill="none" stroke={N} strokeWidth="2"><path d="M19 18A10 10 0 1 1 19 6M21 2v6h-6" /></svg>
              <Caret $ml={0} $c={N} />
            </ViewTool>
            <ViewTool $h={35}>
              <i />
              <svg width="24" height="29" viewBox="0 0 24 29" fill="none" stroke={N}>
                <path d="M1 .5h23" stroke="#666" />
                <path d="M.5 9l2-3.500h20l1 3.500v18.500H.5z" fill="#8da3bd" /><path d="M.5 9.500h23M12 13v12" />
                <path d="M3.500 14.500h2v2h-2zM3.500 18.500h2v2h-2zM3.500 22.500h2v2h-2zM14.500 14.500h2v2h-2zM14.500 18.500h2v2h-2zM14.500 22.500h2v2h-2zM7 15.500h3M7 19.500h3M7 23.500h3M18 15.500h3M18 19.500h3M18 23.500h3M3 11l2 2 3-3M14 11l2 2 3-3" />
              </svg>
            </ViewTool>
          </ViewTools>
          <Handle />
        </View>
      </Main>

      <Status>
        <SText $w={263} $ls={0.6}>X = 369538 Y = 65610</SText>
        <SText $w={83} $ls={0.2}>层高： 3.45</SText>
        <SText $w={133} $ls={0.25}>标高： -0.15~3.3</SText>
        <SText $w={103}>0</SText>
        <SText $w={103} $ls={0.1}>隐藏：0</SText>
        <SButton $w={25}><Icon n="angle" /></SButton>
        <SButton $w={36} $mr={6} $on><Icon n="box" /><Caret $ml={8} /></SButton>
        <SButton $w={25}><Icon n="cross" /></SButton>
        <SButton $w={36}><Icon n="ang2" /><Caret $ml={6} /></SButton>
        <SButton $w={36}><Icon n="plusbox" /><Caret $ml={6} /></SButton>
        <SButton $w={73}>跨图层选择</SButton>
        <SButton $w={61} $mr={6}>折线选择</SButton>
        <SText $w={353}>按鼠标左键指定第一个角点，或拾取构件图元</SText>
        <SText $w={70} $ls={0.1}>52.6316 FPS</SText>
      </Status>
      <Taskbar>
        <Orb />
        <TaskItem $c="#d9c486" /><TaskItem $c="#1d86e4" $r={12} /><TaskItem $c="#6ba9f0" $iw={32} /><TaskItem $c="#3c6c9c" $iw={32} />
        <Clock>16:16</Clock><ShowDesk />
      </Taskbar>

      <Dialog>
        <DTitle>生成吊筋<svg width="9" height="9"><path d="M1 1l7 7M8 1L1 8" stroke="#fff" strokeWidth="1.600" /></svg></DTitle>
        <DBody>
          <Legend>生成位置</Legend>
          <DCheck><Check $on><svg width="10" height="10"><path d="M1 5l3 3 5-6" fill="none" stroke="#fff" strokeWidth="1.800" /></svg></Check>主梁与次梁相交，主梁上</DCheck>
          <DCheck><Check />同截面的次梁相交，均设置</DCheck>
          <Legend />
          <DField /><DField />
          <DButtons><DButton>查看说明</DButton><DButton $main>确定</DButton><DButton>取消</DButton></DButtons>
        </DBody>
      </Dialog>
      <Tip>
        <p>1. 梁和梁相交处有柱或墙时，不生成吊筋和次梁加筋。</p>
        <p>2. 未提取梁跨的梁不布置吊筋和次梁加筋。</p>
        <p>3. 主梁是指梁相交处为支座的梁，次梁是指相交处不为支座的梁。</p>
        <p>4. 次梁加筋输入值是次梁两侧总共的数量，初始信息取自计算设置。</p>
        <svg width="12" height="12"><path d="M1 0v10.500L10 1.500" fill="#fcfcfc" /><path d="M.5 1.500v9L9.500 1.500" fill="none" stroke="#6d6d6d" /></svg>
      </Tip>

      <Ime><b>中</b><Icon n="moon" size={14} /><Icon n="dots" size={15} /><Icon n="keys" /><Icon n="user" size={15} /><Icon n="shirtB" size={15} /><Icon n="wrench" /></Ime>
      <ImeLogo>S</ImeLogo>
    </Screen>
  );
}
